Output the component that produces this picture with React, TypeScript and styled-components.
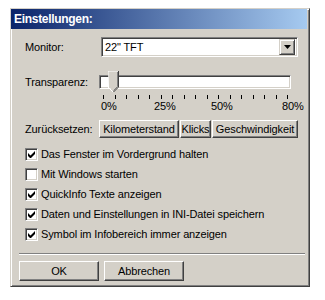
import styled, { createGlobalStyle } from "styled-components";

const Global = createGlobalStyle`
  body {
    margin: 0;
    background: #ffffff;
    font-family: "Liberation Sans", Arial, sans-serif;
    font-size: 11px;
    letter-spacing: -0.12px;
    color: #000;
  }
`;

const Window = styled.div`
  margin: 8px 0 0 10px;
  width: 300px;
  height: 279px;
  box-sizing: border-box;
  background: #d4d0c8;
  border: 1px solid;
  border-color: #d4d0c8 #404040 #404040 #d4d0c8;
  box-shadow: inset 1px 1px 0 #ffffff, inset -1px -1px 0 #808080;
  padding: 0 2px 2px 0;
  display: flex;
  flex-direction: column;
`;

const TitleBar = styled.div`
  height: 20px;
  display: flex;
  align-items: center;
  padding-left: 3px;
  background: linear-gradient(to right, #0a246a, #a6caf0);
  color: #fff;
  font-weight: bold;
  font-size: 12px;
  letter-spacing: -0.3px;
`;

const Body = styled.div`
  padding: 8px 11px 0 14px;
  display: flex;
  flex-direction: column;
`;

const Row = styled.div<{ $mt?: number }>`
  display: grid;
  grid-template-columns: 73px 1fr;
  align-items: center;
  margin-top: ${(p) => p.$mt ?? 0}px;
`;

const Label = styled.span``;

const Select = styled.div`
  margin-left: 3px;
  width: 197px;
  height: 20px;
  box-sizing: border-box;
  background: #fff;
  border: 1px solid;
  border-color: #808080 #ffffff #ffffff #808080;
  box-shadow: inset 1px 1px 0 #404040, inset -1px -1px 0 #d4d0c8;
  display: flex;
  align-items: center;
  padding: 0 2px 0 3px;
  justify-content: space-between;
`;

const DropButton = styled.div`
  width: 16px;
  height: 16px;
  box-sizing: border-box;
  background: #d4d0c8;
  border: 1px solid;
  border-color: #d4d0c8 #404040 #404040 #d4d0c8;
  box-shadow: inset 1px 1px 0 #ffffff, inset -1px -1px 0 #808080;
  display: flex;
  align-items: center;
  justify-content: center;
`;

const SliderBox = styled.div`
  margin-left: 1px;
  width: 192px;
  position: relative;
  height: 22px;
  display: flex;
  align-items: center;
`;

const Track = styled.div`
  width: 100%;
  height: 14px;
  box-sizing: border-box;
  background: #fff;
  border: 1px solid;
  border-color: #808080 #ffffff #ffffff #808080;
  box-shadow: inset 1px 1px 0 #404040, inset -1px -1px 0 #d4d0c8;
`;

const Thumb = styled.svg`
  position: absolute;
  left: 9px;
  top: 0;
`;

const Ticks = styled.div`
  margin: 2px 0 0 78px;
  width: 185px;
  display: flex;
  justify-content: space-between;
`;

const Tick = styled.span`
  width: 1px;
  height: 4px;
  background: #000;
`;

const Scale = styled.div`
  margin: 1px 0 0 76px;
  display: grid;
  grid-template-columns: 53px 57px 71px auto;
`;

const ResetRow = styled.div`
  display: grid;
  grid-template-columns: 73px 80px 31px 86px;
  column-gap: 1px;
  align-items: center;
  margin-top: 8px;
`;

const Button = styled.button<{ $h?: number }>`
  font: inherit;
  letter-spacing: inherit;
  color: #000;
  height: ${(p) => p.$h ?? 18}px;
  width: 100%;
  min-width: 0;
  overflow: hidden;
  white-space: nowrap;
  padding: 0;
  background: #d4d0c8;
  box-sizing: border-box;
  border: 1px solid;
  border-color: #ffffff #404040 #404040 #ffffff;
  box-shadow: inset -1px -1px 0 #808080;
`;

const Checks = styled.div`
  margin-top: 6px;
  display: flex;
  flex-direction: column;
`;

const CheckRow = styled.div`
  height: 20px;
  display: flex;
  align-items: center;
  gap: 3px;
`;

const Box = styled.span`
  width: 13px;
  height: 13px;
  box-sizing: border-box;
  background: #fff;
  border: 1px solid;
  border-color: #808080 #ffffff #ffffff #808080;
  box-shadow: inset 1px 1px 0 #404040, inset -1px -1px 0 #d4d0c8;
  display: flex;
  align-items: center;
  justify-content: center;
`;

const Separator = styled.div`
  margin: 9px 0 0 -6px;
  width: 286px;
  height: 1px;
  background: #808080;
  border-bottom: 1px solid #ffffff;
`;

const Footer = styled.div`
  margin: 6px 0 0 -6px;
  display: grid;
  grid-template-columns: 80px 80px;
  column-gap: 5px;
`;

const options = [
  { text: "Das Fenster im Vordergrund halten", on: true },
  { text: "Mit Windows starten", on: false },
  { text: "QuickInfo Texte anzeigen", on: true },
  { text: "Daten und Einstellungen in INI-Datei speichern", on: true },
  { text: "Symbol im Infobereich immer anzeigen", on: true },
];

function Check({ on }: { on: boolean }) {
  return (
    <Box>
      {on && (
        <svg width="7" height="7" viewBox="0 0 7 7">
          <path d="M0 2v3l2 2h1l4-4V0L2.5 4.5z" fill="#000" />
        </svg>
      )}
    </Box>
  );
}

export default function App() {
  return (
    <>
      <Global />
      <Window>
        <TitleBar>Einstellungen:</TitleBar>
        <Body>
          <Row>
            <Label>Monitor:</Label>
            <Select>
              <span>22" TFT</span>
              <DropButton>
                <svg width="7" height="4" viewBox="0 0 7 4">
                  <path d="M0 0h7L3.5 4z" fill="#000" />
                </svg>
              </DropButton>
            </Select>
          </Row>
          <Row $mt={14}>
            <Label>Transparenz:</Label>
            <SliderBox>
              <Track />
              <Thumb width="11" height="21" viewBox="0 0 11 21">
                <path d="M0 0h11v16l-5 5-5-5z" fill="#d4d0c8" />
                <path d="M10 0H0v16l5 5" fill="none" stroke="#fff" />
                <path d="M10.5 0v16l-5 5" fill="none" stroke="#404040" />
                <path d="M9.5 1v14.5l-4 4" fill="none" stroke="#808080" />
              </Thumb>
            </SliderBox>
          </Row>
          <Ticks>
            {Array.from({ length: 17 }, (_, i) => (
              <Tick key={i} />
            ))}
          </Ticks>
          <Scale>
            <span>0%</span>
            <span>25%</span>
            <span>50%</span>
            <span>80%</span>
          </Scale>
          <ResetRow>
            <Label>Zurücksetzen:</Label>
            <Button>Kilometerstand</Button>
            <Button>Klicks</Button>
            <Button>Geschwindigkeit</Button>
          </ResetRow>
          <Checks>
            {options.map((o) => (
              <CheckRow key={o.text}>
                <Check on={o.on} />
                <span>{o.text}</span>
              </CheckRow>
            ))}
          </Checks>
          <Separator />
          <Footer>
            <Button $h={20}>OK</Button>
            <Button $h={20}>Abbrechen</Button>
          </Footer>
        </Body>
      </Window>
    </>
  );
}
